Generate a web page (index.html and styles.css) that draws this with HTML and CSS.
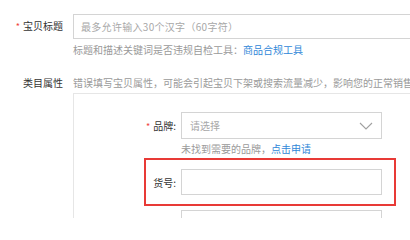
FILE: index.html
```html
<!DOCTYPE html>
<html lang="zh-CN">
<head>
<meta charset="utf-8">
<link rel="stylesheet" href="styles.css">
</head>
<body>
<div class="page">
  <div class="row title-row">
    <div class="label"><span class="req">*</span>宝贝标题</div>
    <div class="title-input">最多允许输入30个汉字（60字符）</div>
  </div>
  <div class="help">标题和描述关键词是否违规自检工具：<a class="link">商品合规工具</a></div>

  <div class="row cat-row">
    <div class="label">类目属性</div>
    <div class="cat-tip">错误填写宝贝属性，可能会引起宝贝下架或搜索流量减少，影响您的正常销售</div>
  </div>

  <div class="panel">
    <div class="prop">
      <div class="prop-label"><span class="req">*</span>品牌:</div>
      <div class="select">
        <span class="ph">请选择</span>
        <svg class="chev" width="14" height="8" viewBox="0 0 14 8"><polyline points="1,1 7,7 13,1" fill="none" stroke="#a0a0a0" stroke-width="1.1"/></svg>
      </div>
    </div>
    <div class="prop-hint">未找到需要的品牌，<a class="link">点击申请</a></div>

    <div class="highlight">
      <div class="prop-label short">货号:</div>
      <div class="text-input"></div>
    </div>

    <div class="prop next">
      <div class="prop-label"><span class="req">*</span>材质:</div>
      <div class="select">
        <span class="ph">请选择</span>
        <svg class="chev" width="14" height="8" viewBox="0 0 14 8"><polyline points="1,1 7,7 13,1" fill="none" stroke="#a0a0a0" stroke-width="1.1"/></svg>
      </div>
    </div>
  </div>
</div>
</body>
</html>
```

FILE: styles.css
```css
html, body {
  margin: 0;
  padding: 0;
  background: #fff;
  overflow: hidden;
}
body {
  width: 410px;
  height: 218px;
  font-family: "Noto Sans CJK SC", "Noto Sans", sans-serif;
  font-size: 10px;
  color: #333;
}
.page {
  padding-top: 14px;
}
.row {
  display: flex;
  align-items: center;
}
.label {
  width: 73px;
  box-sizing: border-box;
  padding-right: 10px;
  text-align: right;
  flex: none;
  line-height: 14px;
  color: #333;
}
.req {
  color: #f0443c;
  margin-right: 3px;
  font-size: 9px;
}
.title-row {
  height: 25px;
}
.title-input {
  flex: none;
  width: 360px;
  height: 25px;
  box-sizing: border-box;
  border: 1px solid #d4d4d4;
  padding-left: 7px;
  font-size: 10px;
  letter-spacing: 0.3px;
  line-height: 23px;
  color: #a8a8a8;
  white-space: nowrap;
}
.help {
  margin-left: 73px;
  margin-top: 4px;
  line-height: 14px;
  color: #9a9a9a;
  white-space: nowrap;
}
.link {
  color: #2f87d8;
}
.cat-row {
  margin-top: 19px;
  height: 14px;
}
.cat-tip {
  white-space: nowrap;
  color: #9a9a9a;
  line-height: 14px;
}
.panel {
  margin-top: 3px;
  margin-left: 73px;
  width: 360px;
  height: 200px;
  box-sizing: border-box;
  border: 1px solid #e6e6e6;
  padding-top: 18px;
}
.prop {
  display: flex;
  align-items: center;
}
.prop-label {
  width: 107px;
  box-sizing: border-box;
  padding-right: 5px;
  text-align: right;
  flex: none;
  color: #333;
}
.prop-label.short {
  width: 35px;
}
.select {
  width: 201px;
  height: 27px;
  box-sizing: border-box;
  border: 1px solid #d4d4d4;
  display: flex;
  align-items: center;
  justify-content: space-between;
  padding: 0 8px 0 8px;
}
.ph {
  color: #a8a8a8;
}
.prop-hint {
  margin-left: 107px;
  margin-top: 3px;
  line-height: 14px;
  color: #9a9a9a;
  white-space: nowrap;
}
.highlight {
  margin-top: 2px;
  margin-left: 70px;
  width: 252px;
  height: 48px;
  box-sizing: border-box;
  border: 2px solid #e83a36;
  display: flex;
  align-items: center;
}
.text-input {
  width: 201px;
  height: 26px;
  box-sizing: border-box;
  border: 1px solid #d4d4d4;
}
.prop.next {
  margin-top: 4px;
}
```
